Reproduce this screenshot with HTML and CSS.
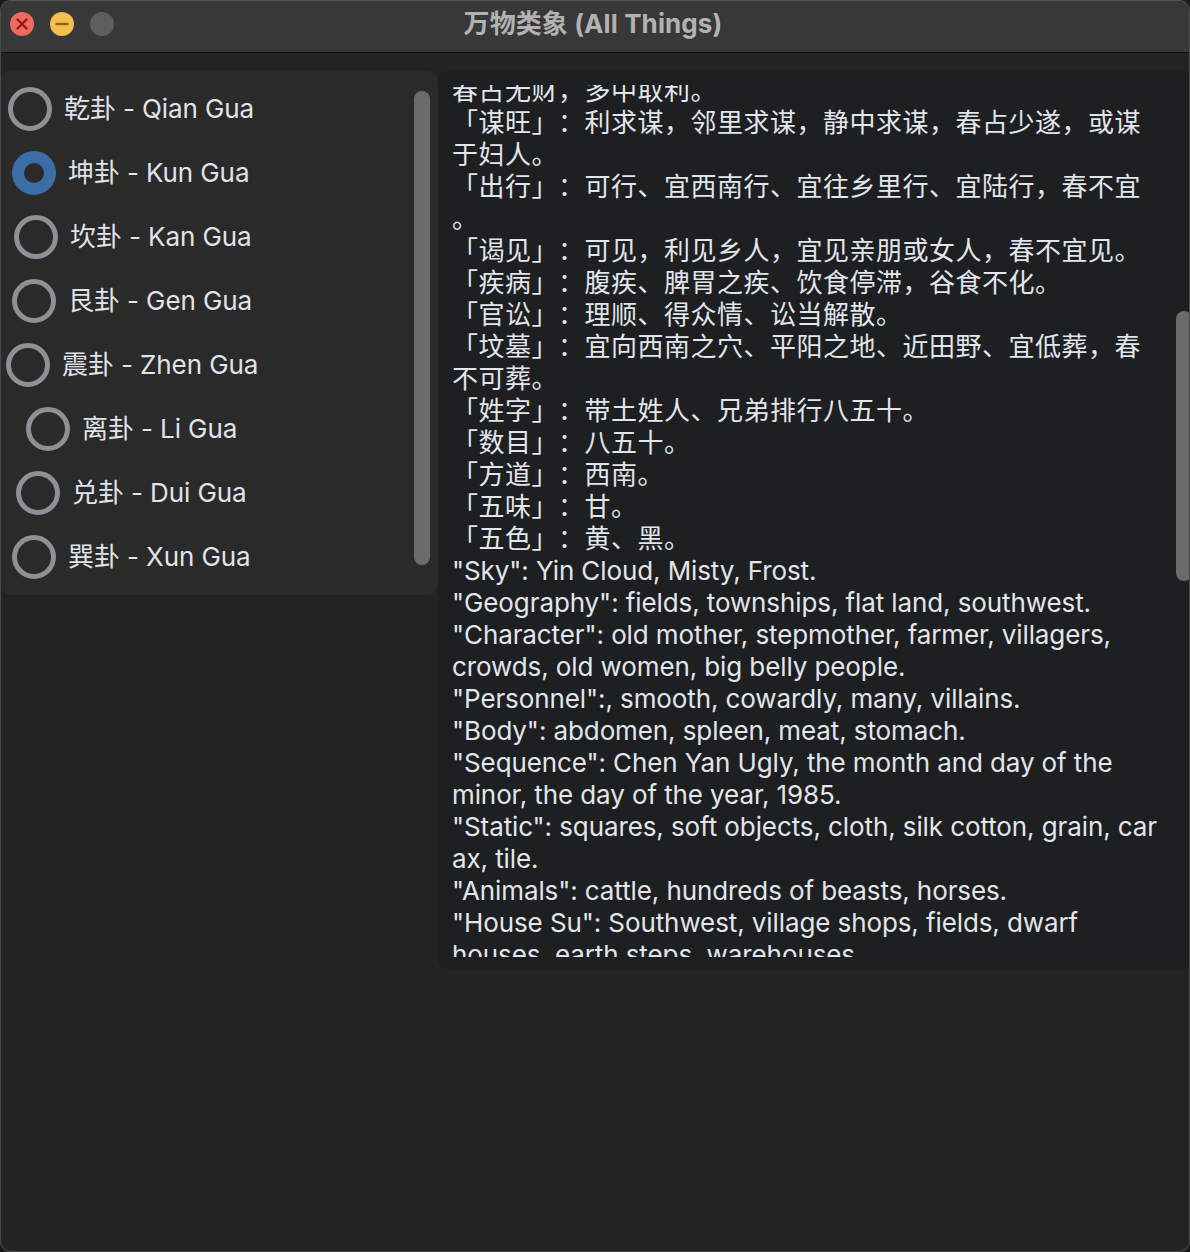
FILE: index.html
```html
<!DOCTYPE html>
<html lang="zh">
<head>
<meta charset="utf-8">
<title>万物类象 (All Things)</title>
<link rel="stylesheet" href="styles.css">
</head>
<body>
<div class="window">
  <div class="titlebar">
    <div class="lights">
      <svg class="light" width="24" height="24" viewBox="0 0 24 24"><circle cx="12" cy="12" r="12" fill="#ec6a5e"/><path d="M7.5 7.5 L16.5 16.5 M16.5 7.5 L7.5 16.5" stroke="#8c1a10" stroke-width="2.2" stroke-linecap="round"/></svg>
      <svg class="light" width="24" height="24" viewBox="0 0 24 24"><circle cx="12" cy="12" r="12" fill="#f4bf4f"/><path d="M6.5 12 L17.5 12" stroke="#985f0a" stroke-width="2.6" stroke-linecap="round"/></svg>
      <svg class="light" width="24" height="24" viewBox="0 0 24 24"><circle cx="12" cy="12" r="12" fill="#5d5d5d"/></svg>
    </div>
    <div class="title">万物类象 (All Things)</div>
  </div>
  <div class="content">
    <div class="left-panel">
      <div class="radio-list">
        <div class="row off-1"><span class="radio"></span><span class="label">乾卦 - Qian Gua</span></div>
        <div class="row off-2"><span class="radio checked"></span><span class="label">坤卦 - Kun Gua</span></div>
        <div class="row off-3"><span class="radio"></span><span class="label">坎卦 - Kan Gua</span></div>
        <div class="row off-4"><span class="radio"></span><span class="label">艮卦 - Gen Gua</span></div>
        <div class="row off-5"><span class="radio"></span><span class="label">震卦 - Zhen Gua</span></div>
        <div class="row off-6"><span class="radio"></span><span class="label">离卦 - Li Gua</span></div>
        <div class="row off-7"><span class="radio"></span><span class="label">兑卦 - Dui Gua</span></div>
        <div class="row off-8"><span class="radio"></span><span class="label">巽卦 - Xun Gua</span></div>
      </div>
      <div class="left-thumb"></div>
    </div>
    <div class="right-panel">
      <div class="viewport">
        <div class="text">
          <div class="line cjk">春占无财，多中取利。</div>
          <div class="line cjk">「谋旺」：利求谋，邻里求谋，静中求谋，春占少遂，或谋</div>
          <div class="line cjk">于妇人。</div>
          <div class="line cjk">「出行」：可行、宜西南行、宜往乡里行、宜陆行，春不宜</div>
          <div class="line cjk">。</div>
          <div class="line cjk">「谒见」：可见，利见乡人，宜见亲朋或女人，春不宜见。</div>
          <div class="line cjk">「疾病」：腹疾、脾胃之疾、饮食停滞，谷食不化。</div>
          <div class="line cjk">「官讼」：理顺、得众情、讼当解散。</div>
          <div class="line cjk">「坟墓」：宜向西南之穴、平阳之地、近田野、宜低葬，春</div>
          <div class="line cjk">不可葬。</div>
          <div class="line cjk">「姓字」：带土姓人、兄弟排行八五十。</div>
          <div class="line cjk">「数目」：八五十。</div>
          <div class="line cjk">「方道」：西南。</div>
          <div class="line cjk">「五味」：甘。</div>
          <div class="line cjk">「五色」：黄、黑。</div>
          <div class="line">"Sky": Yin Cloud, Misty, Frost.</div>
          <div class="line">"Geography": fields, townships, flat land, southwest.</div>
          <div class="line">"Character": old mother, stepmother, farmer, villagers,</div>
          <div class="line">crowds, old women, big belly people.</div>
          <div class="line">"Personnel":, smooth, cowardly, many, villains.</div>
          <div class="line">"Body": abdomen, spleen, meat, stomach.</div>
          <div class="line">"Sequence": Chen Yan Ugly, the month and day of the</div>
          <div class="line">minor, the day of the year, 1985.</div>
          <div class="line">"Static": squares, soft objects, cloth, silk cotton, grain, car</div>
          <div class="line">ax, tile.</div>
          <div class="line">"Animals": cattle, hundreds of beasts, horses.</div>
          <div class="line">"House Su": Southwest, village shops, fields, dwarf</div>
          <div class="line">houses, earth steps, warehouses.</div>
        </div>
      </div>
      <div class="right-thumb"></div>
    </div>
  </div>
</div>
</body>
</html>
```

FILE: styles.css
```css
* { box-sizing: border-box; }
html, body {
  margin: 0;
  padding: 0;
  background: #1b1b1b;
  width: 1190px;
  height: 1252px;
  overflow: hidden;
}
.window {
  width: 1190px;
  height: 1252px;
  background: #232323;
  border-radius: 11px;
  border: 1px solid #4a4a4a;
  border-top-color: #555;
  overflow: hidden;
  font-family: "Inter", "Noto Sans CJK SC", sans-serif;
}
.titlebar {
  height: 52px;
  background: #383838;
  border-bottom: 1px solid #0e0e0e;
  display: grid;
  grid-template-areas: "a";
  align-items: center;
}
.lights {
  grid-area: a;
  justify-self: start;
  display: flex;
  gap: 16px;
  padding-left: 9px;
  margin-top: -5px;
}
.light { display: block; }
.title {
  grid-area: a;
  justify-self: center;
  color: #b2b2b2;
  font-weight: 700;
  font-size: 26px;
  margin-left: -4px;
  margin-top: -10px;
  letter-spacing: 0.1px;
}
.content {
  display: flex;
  align-items: flex-start;
  padding-top: 18px;
  margin-left: -1px;
}
.left-panel {
  width: 438px;
  height: 524px;
  flex: none;
  background: #2a2a2a;
  border-radius: 10px;
  display: flex;
  align-items: flex-start;
}
.radio-list {
  flex: 1;
  padding-top: 6px;
}
.row {
  height: 64px;
  display: flex;
  align-items: center;
  gap: 12px;
}
.off-1 { padding-left: 8px; }
.off-2 { padding-left: 12px; }
.off-3 { padding-left: 14px; }
.off-4 { padding-left: 12px; }
.off-5 { padding-left: 6px; }
.off-6 { padding-left: 26px; }
.off-7 { padding-left: 16px; }
.off-8 { padding-left: 12px; }
.radio {
  width: 44px;
  height: 44px;
  border-radius: 50%;
  border: 5px solid #8d9094;
  flex: none;
}
.radio.checked {
  border: 12px solid #3c6da6;
  background: #2a2a2a;
}
.label {
  color: #e0e3eb;
  font-size: 26px;
  line-height: 32px;
  letter-spacing: -0.1px;
}
.left-thumb {
  width: 16px;
  height: 474px;
  margin: 20px 8px 0 0;
  background: #6b6b6b;
  border-radius: 8px;
  flex: none;
}
.right-panel {
  position: relative;
  flex: none;
  width: 770px;
  height: 898px;
  margin-left: 0;
  background: #1e1f20;
  border-radius: 10px;
}
.viewport {
  margin-top: 14px;
  margin-left: 14px;
  height: 872px;
  width: 740px;
  overflow: hidden;
}
.text {
  margin-top: -10px;
  color: #e2e5ec;
  font-size: 26px;
  line-height: 32px;
  letter-spacing: -0.1px;
  text-spacing-trim: space-all;
}
.line {
  white-space: nowrap;
  height: 32px;
}
.line.cjk {
  letter-spacing: 0.5px;
}
.right-thumb {
  position: absolute;
  left: 738px;
  top: 240px;
  width: 16px;
  height: 270px;
  background: #6b6b6b;
  border-radius: 8px;
}
```
